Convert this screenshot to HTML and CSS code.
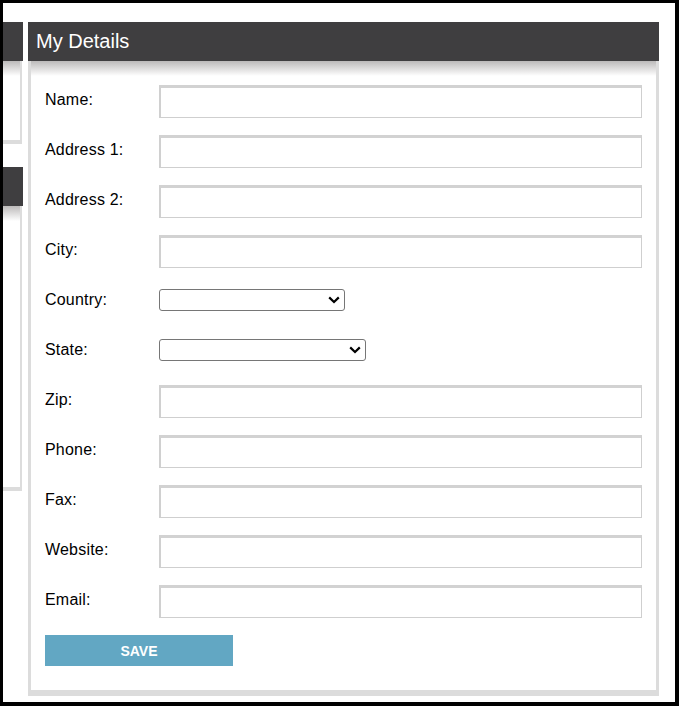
FILE: index.html
```html
<!DOCTYPE html>
<html>
<head>
<meta charset="utf-8">
<link rel="stylesheet" href="styles.css">
</head>
<body>
<div class="frame">
  <div class="side">
    <div class="panel side-panel p1">
      <div class="panel-head"></div>
      <div class="panel-body"></div>
    </div>
    <div class="panel side-panel p2">
      <div class="panel-head"></div>
      <div class="panel-body"></div>
    </div>
  </div>
  <div class="panel main-panel">
    <div class="panel-head"><h2 class="title">My Details</h2></div>
    <div class="panel-body">
      <form class="form">
        <label class="lbl">Name:</label><input class="txt" type="text">
        <label class="lbl">Address 1:</label><input class="txt" type="text">
        <label class="lbl">Address 2:</label><input class="txt" type="text">
        <label class="lbl">City:</label><input class="txt" type="text">
        <label class="lbl">Country:</label><div class="selwrap"><select class="sel sel-country"><option></option></select></div>
        <label class="lbl">State:</label><div class="selwrap"><select class="sel sel-state"><option></option></select></div>
        <label class="lbl">Zip:</label><input class="txt" type="text">
        <label class="lbl">Phone:</label><input class="txt" type="text">
        <label class="lbl">Fax:</label><input class="txt" type="text">
        <label class="lbl">Website:</label><input class="txt" type="text">
        <label class="lbl">Email:</label><input class="txt" type="text">
      </form>
      <button class="save" type="button">SAVE</button>
    </div>
  </div>
</div>
</body>
</html>
```

FILE: styles.css
```css
html, body {
  margin: 0;
  padding: 0;
  background: #fff;
}
.frame {
  box-sizing: border-box;
  width: 679px;
  height: 706px;
  border-style: solid;
  border-color: #000;
  border-width: 3px 4px 4px 3px;
  padding-top: 19px;
  display: flex;
  gap: 5px;
  overflow: hidden;
  font-family: "Liberation Sans", Arial, sans-serif;
}
.side {
  width: 20px;
  flex: none;
  display: flex;
  flex-direction: column;
  gap: 23px;
}
.panel-head {
  height: 39px;
  background: #3f3e40;
}
.panel-body {
  background: linear-gradient(to bottom, #bcbaba 0, #fff 15px);
}
.side-panel .panel-body {
  border-right: 2px solid #dcdcdc;
  margin-right: 1px;
  border-bottom: 4px solid #dcdcdc;
}
.p1 .panel-body { height: 79px; }
.p2 .panel-body { height: 281px; }
.main-panel {
  width: 631px;
  flex: none;
}
.title {
  margin: 0;
  padding-left: 8px;
  color: #fff;
  font-weight: normal;
  font-size: 20px;
  line-height: 39px;
}
.main-panel .panel-body {
  border-left: 3px solid #dcdcdc;
  border-right: 3px solid #dcdcdc;
  border-bottom: 6px solid #dcdcdc;
  padding: 24px 14px 24px 14px;
}
.form {
  display: grid;
  grid-template-columns: 114px 483px;
  grid-auto-rows: 33px;
  row-gap: 17px;
  margin: 0;
}
.lbl {
  font-size: 16px;
  line-height: 18px;
  padding-top: 6px;
  letter-spacing: 0.2px;
  color: #000;
}
.txt {
  box-sizing: border-box;
  width: 483px;
  height: 33px;
  margin: 0;
  border-style: solid;
  border-color: #d2d2d2 #cfcfcf #cfcfcf #d0d0d0;
  border-width: 3px 1px 1px 2px;
  background: #fff;
  outline: none;
  padding: 0 6px;
}
.selwrap {
  display: flex;
  align-items: flex-start;
  padding-top: 4px;
}
.sel {
  -webkit-appearance: none;
  appearance: none;
  box-sizing: border-box;
  height: 22px;
  margin: 0;
  background-color: #fff;
  background-image: url("data:image/svg+xml;utf8,<svg xmlns='http://www.w3.org/2000/svg' width='12' height='8' viewBox='0 0 12 8'><path d='M1.2 1.4 L6 6 L10.8 1.4' fill='none' stroke='black' stroke-width='2.2'/></svg>");
  background-repeat: no-repeat;
  background-position: right 4px center;
  background-size: 12px 8px;
  border: 1px solid #767676;
  border-radius: 3px;
  font-size: 13px;
}
.sel-country { width: 186px; }
.sel-state { width: 207px; }
.save {
  display: block;
  margin-top: 17px;
  width: 188px;
  height: 31px;
  border: none;
  background: #62a7c3;
  color: #fff;
  font-family: "Liberation Sans", Arial, sans-serif;
  font-weight: bold;
  font-size: 14px;
  padding: 0;
}
```
